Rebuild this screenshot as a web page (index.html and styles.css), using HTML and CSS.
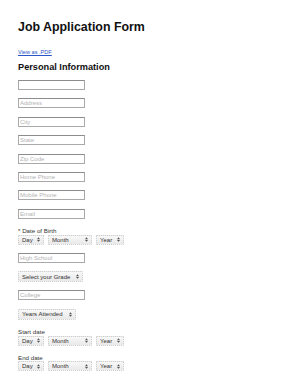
FILE: index.html
```html
<!DOCTYPE html>
<html lang="en">
<head>
    <meta charset="UTF-8">
    <title>Job Application Form</title>
    <link rel="stylesheet" href="styles.css">
</head>
<body>
    <div class="container">
        <h1>Job Application Form</h1>
        <a href="#" class="pdf-link">View as .PDF</a>
        <h2>Personal Information</h2>

        <form class="form">
            <input class="text" type="text">
            <input class="text" type="text" placeholder="Address">
            <input class="text" type="text" placeholder="City">
            <input class="text" type="text" placeholder="State">
            <input class="text" type="text" placeholder="Zip Code">
            <input class="text" type="text" placeholder="Home Phone">
            <input class="text" type="text" placeholder="Mobile Phone">
            <input class="text" type="text" placeholder="Email">

            <div class="group">
                <label class="label">* Date of Birth</label>
                <div class="date-row">
                    <span class="select day"><select><option>Day</option></select><svg class="arrows" viewBox="0 0 4 6"><path d="M0 2.5 L2 0 L4 2.5 Z M0 3.5 L2 6 L4 3.5 Z"/></svg></span>
                    <span class="select month"><select><option>Month</option></select><svg class="arrows" viewBox="0 0 4 6"><path d="M0 2.5 L2 0 L4 2.5 Z M0 3.5 L2 6 L4 3.5 Z"/></svg></span>
                    <span class="select year"><select><option>Year</option></select><svg class="arrows" viewBox="0 0 4 6"><path d="M0 2.5 L2 0 L4 2.5 Z M0 3.5 L2 6 L4 3.5 Z"/></svg></span>
                </div>
            </div>

            <input class="text" type="text" placeholder="High School">
            <span class="select grade"><select><option>Select your Grade</option></select><svg class="arrows" viewBox="0 0 4 6"><path d="M0 2.5 L2 0 L4 2.5 Z M0 3.5 L2 6 L4 3.5 Z"/></svg></span>
            <input class="text" type="text" placeholder="College">
            <span class="select attended"><select><option>Years Attended</option></select><svg class="arrows" viewBox="0 0 4 6"><path d="M0 2.5 L2 0 L4 2.5 Z M0 3.5 L2 6 L4 3.5 Z"/></svg></span>

            <div class="group">
                <label class="label">Start date</label>
                <div class="date-row">
                    <span class="select day"><select><option>Day</option></select><svg class="arrows" viewBox="0 0 4 6"><path d="M0 2.5 L2 0 L4 2.5 Z M0 3.5 L2 6 L4 3.5 Z"/></svg></span>
                    <span class="select month"><select><option>Month</option></select><svg class="arrows" viewBox="0 0 4 6"><path d="M0 2.5 L2 0 L4 2.5 Z M0 3.5 L2 6 L4 3.5 Z"/></svg></span>
                    <span class="select year"><select><option>Year</option></select><svg class="arrows" viewBox="0 0 4 6"><path d="M0 2.5 L2 0 L4 2.5 Z M0 3.5 L2 6 L4 3.5 Z"/></svg></span>
                </div>
            </div>

            <div class="group">
                <label class="label">End date</label>
                <div class="date-row">
                    <span class="select day"><select><option>Day</option></select><svg class="arrows" viewBox="0 0 4 6"><path d="M0 2.5 L2 0 L4 2.5 Z M0 3.5 L2 6 L4 3.5 Z"/></svg></span>
                    <span class="select month"><select><option>Month</option></select><svg class="arrows" viewBox="0 0 4 6"><path d="M0 2.5 L2 0 L4 2.5 Z M0 3.5 L2 6 L4 3.5 Z"/></svg></span>
                    <span class="select year"><select><option>Year</option></select><svg class="arrows" viewBox="0 0 4 6"><path d="M0 2.5 L2 0 L4 2.5 Z M0 3.5 L2 6 L4 3.5 Z"/></svg></span>
                </div>
            </div>
        </form>
    </div>
</body>
</html>
```

FILE: styles.css
```css
body {
    margin: 0;
    background-color: white;
    font-family: 'Liberation Sans', Arial, sans-serif;
    color: #222;
}
.container {
    padding: 20px 0 0 18px;
    display: flex;
    flex-direction: column;
    align-items: flex-start;
}
h1 {
    font-size: 12.4px;
    line-height: 14px;
    margin: 0;
    color: #111;
}
.pdf-link {
    font-size: 5.6px;
    line-height: 7px;
    margin-top: 15px;
    color: #2a56c6;
    text-decoration: underline;
}
h2 {
    font-size: 9.2px;
    line-height: 11px;
    margin: 6px 0 0 0;
    color: #111;
}
.form {
    display: flex;
    flex-direction: column;
    align-items: flex-start;
    margin-top: 7px;
}
.text {
    box-sizing: border-box;
    width: 67px;
    height: 10px;
    margin: 0 0 8.4px 0;
    padding: 0 1px;
    border: 1px solid #a9a9a9;
    border-top-color: #8c8c8c;
    font-family: inherit;
    font-size: 6px;
    color: #333;
    outline: none;
}
.text::placeholder {
    color: #b3b3b3;
}
.group {
    display: flex;
    flex-direction: column;
    margin-bottom: 8px;
}
.label {
    font-size: 6.2px;
    line-height: 7px;
    color: #333;
    margin-bottom: 0.5px;
}
.date-row {
    display: flex;
    gap: 4px;
}
.select {
    position: relative;
    display: flex;
    height: 10px;
    margin-bottom: 8.4px;
}
.date-row .select {
    margin-bottom: 0;
}
.select select {
    -webkit-appearance: none;
    appearance: none;
    display: block;
    box-sizing: border-box;
    width: 100%;
    height: 100%;
    margin: 0;
    padding: 0 0 0 3px;
    border: 1px dotted #cfcfcf;
    border-radius: 1px;
    background: linear-gradient(#f8f8f8, #e9e9e9);
    font-family: inherit;
    font-size: 6px;
    line-height: 8px;
    color: #333;
}
.arrows {
    position: absolute;
    right: 4px;
    top: 50%;
    width: 3px;
    height: 5px;
    margin-top: -2.5px;
    fill: #555;
    pointer-events: none;
}
.day { width: 26px; }
.month { width: 44px; }
.year { width: 28px; }
.grade { width: 65px; height: 11px; }
.attended { width: 58px; height: 11px; }
```
